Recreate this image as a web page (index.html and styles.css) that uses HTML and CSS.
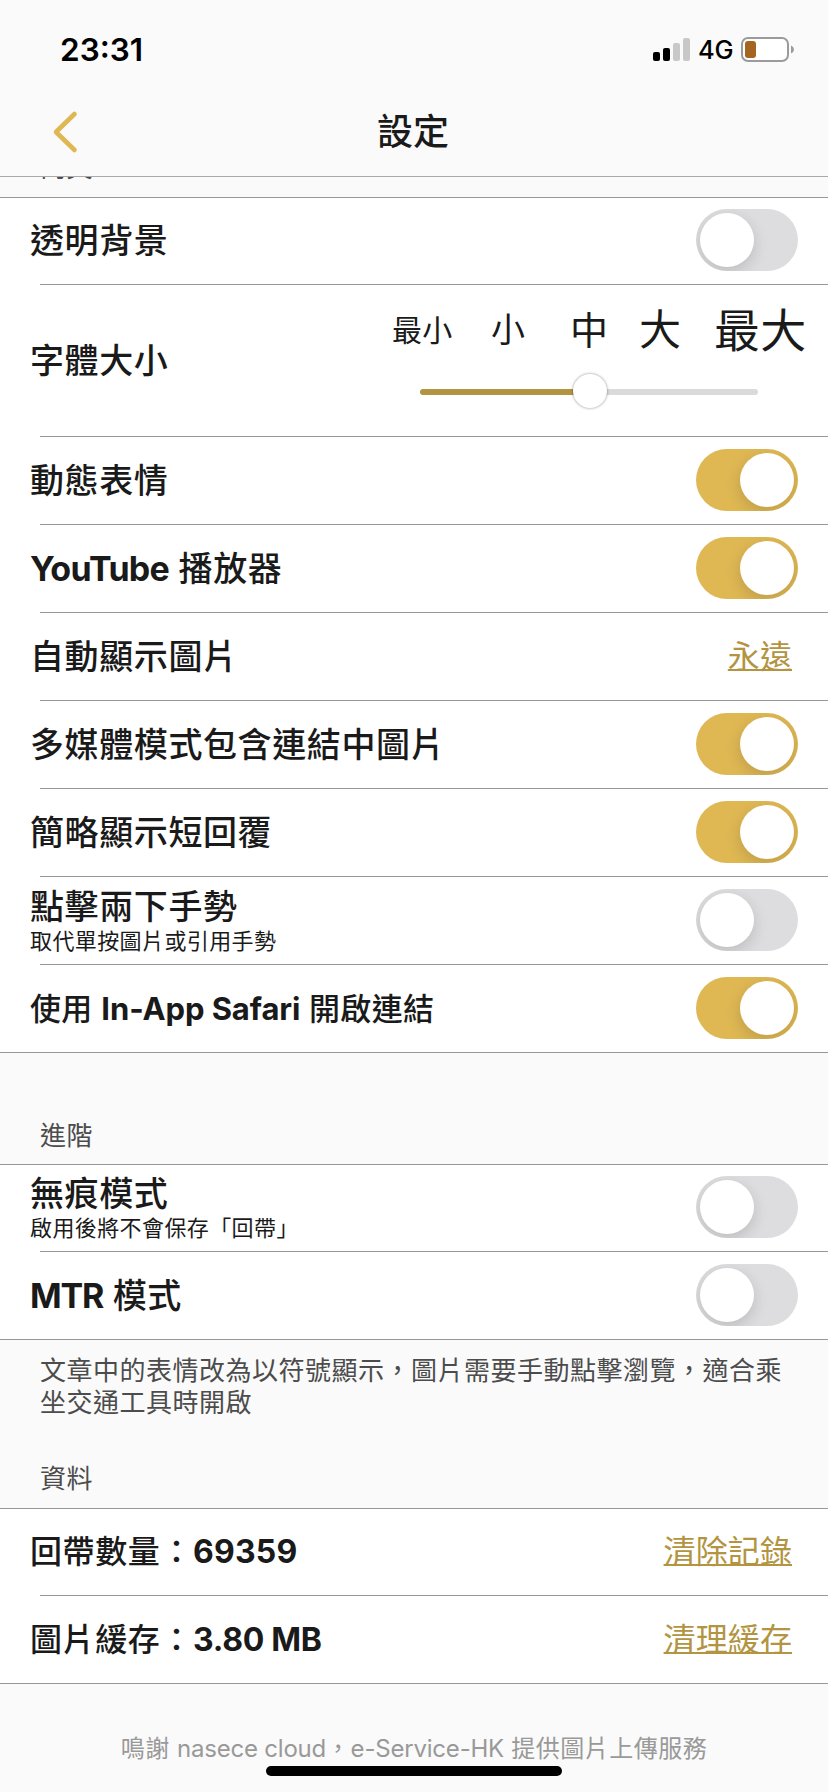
FILE: index.html
```html
<!DOCTYPE html>
<html lang="zh-Hant">
<head>
<meta charset="utf-8">
<title>設定</title>
<link rel="stylesheet" href="styles.css">
</head>
<body>
<div class="screen">
  <header class="top">
    <div class="status">
      <span class="time">23:31</span>
      <div class="indicators">
        <svg class="signal" width="38" height="24" viewBox="0 0 38 24">
          <rect x="0" y="14" width="7" height="9" rx="2" fill="#000"/>
          <rect x="10" y="10" width="7" height="13" rx="2" fill="#000"/>
          <rect x="20" y="5" width="7" height="18" rx="2" fill="#c8c8c8"/>
          <rect x="30" y="0" width="7" height="23" rx="2" fill="#c8c8c8"/>
        </svg>
        <span class="network">4G</span>
        <svg class="battery" width="54" height="26" viewBox="0 0 54 26">
          <rect x="1" y="1" width="46" height="23" rx="6" fill="#fff" stroke="#9b9b9b" stroke-width="2"/>
          <rect x="4" y="4" width="11" height="17" rx="3" fill="#a56420"/>
          <path d="M50 8.500q3 1.500 3 4t-3 4z" fill="#9b9b9b"/>
        </svg>
      </div>
    </div>
    <nav class="nav">
      <svg class="back" width="28" height="46" viewBox="0 0 28 46"><path d="M23.500 5L5 23L23.500 41" fill="none" stroke="#dfb854" stroke-width="4.600" stroke-linecap="round" stroke-linejoin="round"/></svg>
      <h1 class="title">設定</h1>
    </nav>
  </header>
  <main>
    <div class="cut"><span>內文</span></div>
    <section class="group">
      <div class="row first"><span class="label">透明背景</span><span class="toggle"><i></i></span></div>
      <hr>
      <div class="row tall">
        <span class="label">字體大小</span>
        <div class="sizer">
          <div class="sizes"><span class="s1">最小</span><span class="s2">小</span><span class="s3">中</span><span class="s4">大</span><span class="s5">最大</span></div>
          <div class="slider"><div class="fill"></div><div class="knob"></div><div class="rest"></div></div>
        </div>
      </div>
      <hr>
      <div class="row"><span class="label">動態表情</span><span class="toggle on"><i></i></span></div>
      <hr>
      <div class="row"><span class="label"><b class="yt">YouTube</b> 播放器</span><span class="toggle on"><i></i></span></div>
      <hr>
      <div class="row"><span class="label">自動顯示圖片</span><a class="link">永遠</a></div>
      <hr>
      <div class="row"><span class="label">多媒體模式包含連結中圖片</span><span class="toggle on"><i></i></span></div>
      <hr>
      <div class="row"><span class="label">簡略顯示短回覆</span><span class="toggle on"><i></i></span></div>
      <hr>
      <div class="row"><div class="stack"><span class="label">點擊兩下手勢</span><span class="sub">取代單按圖片或引用手勢</span></div><span class="toggle"><i></i></span></div>
      <hr>
      <div class="row"><span class="label narrow">使用 <b class="sf">In-App Safari</b> 開啟連結</span><span class="toggle on"><i></i></span></div>
    </section>
    <h2 class="heading wide">進階</h2>
    <section class="group">
      <div class="row first"><div class="stack"><span class="label">無痕模式</span><span class="sub">啟用後將不會保存「回帶」</span></div><span class="toggle"><i></i></span></div>
      <hr>
      <div class="row"><span class="label"><b class="mtr">MTR</b> 模式</span><span class="toggle"><i></i></span></div>
    </section>
    <p class="note">文章中的表情改為以符號顯示，圖片需要手動點擊瀏覽，適合乘坐交通工具時開啟</p>
    <h2 class="heading">資料</h2>
    <section class="group">
      <div class="row first"><span class="label value"><span class="key">回帶數量：</span><b class="count">69359</b></span><a class="link">清除記錄</a></div>
      <hr>
      <div class="row"><span class="label value"><span class="key">圖片緩存：</span><b class="size">3.80 MB</b></span><a class="link">清理緩存</a></div>
    </section>
    <p class="credit">鳴謝 <span>nasece cloud</span>，<span>e-Service-HK</span> 提供圖片上傳服務</p>
  </main>
  <div class="home"></div>
</div>
</body>
</html>
```
FILE: styles.css
```css
* { box-sizing: border-box; }
body {
  margin: 0;
  background: #fafafa;
  color: #1a1a1a;
  font-family: Inter, "Noto Sans CJK TC", sans-serif;
}
.screen {
  position: relative;
  width: 828px;
  height: 1792px;
  overflow: hidden;
}
.top {
  height: 177px;
  border-bottom: 1px solid #a9a9a9;
}
.status {
  display: flex;
  justify-content: space-between;
  height: 88px;
  padding: 30px 33px 0 60px;
}
.time {
  color: #000;
  font-size: 31.500px;
  font-weight: 600;
  line-height: 40px;
}
.indicators { display: flex; }
.signal { margin: 8px 7px 0 0; }
.network {
  width: 36px;
  margin-right: 7px;
  color: #000;
  font-size: 25.500px;
  font-weight: 500;
  letter-spacing: -.3px;
  line-height: 40px;
  white-space: nowrap;
}
.battery { margin-top: 7px; }
.nav {
  display: grid;
  grid-template-columns: 1fr auto 1fr;
  height: 88px;
}
.back { margin: 21px 0 0 51px; }
.title {
  margin: 0 2px 0 0;
  font-size: 36px;
  font-weight: 500;
  line-height: 88px;
}
.cut {
  height: 20px;
  padding-left: 40px;
  overflow: hidden;
}
.cut span {
  display: block;
  margin-top: -25px;
  color: #4c4c4c;
  font-size: 26px;
  letter-spacing: .45px;
  line-height: 32px;
}
.group {
  background: #fff;
  border-top: 1px solid #979797;
  border-bottom: 1px solid #979797;
}
hr {
  height: 1px;
  margin: 0 0 0 40px;
  border: 0;
  background: #979797;
}
.row {
  display: flex;
  align-items: center;
  justify-content: space-between;
  height: 87px;
  padding: 0 30px 0 30px;
}
.row.first { height: 86px; }
.row.tall { height: 151px; padding-right: 0; }
.label {
  font-size: 34px;
  font-weight: 500;
  letter-spacing: .6px;
  line-height: 40px;
  white-space: nowrap;
}
.label b {
  font-weight: 700;
  letter-spacing: 0;
}
.label .yt { letter-spacing: -.8px; }
.label .mtr { letter-spacing: -1.200px; }
.label .sf { letter-spacing: -.1px; }
.label .count { letter-spacing: .2px; }
.label .size { letter-spacing: -.3px; }
.narrow { font-size: 31px; letter-spacing: .35px; }
.value { font-size: 32px; letter-spacing: 0; }
.key { letter-spacing: .6px; }
.stack {
  display: flex;
  flex-direction: column;
  padding-top: 4px;
}
.stack .label { line-height: 36px; }
.sub {
  font-size: 22px;
  letter-spacing: .4px;
  line-height: 32px;
  white-space: nowrap;
}
.toggle {
  display: flex;
  align-self: flex-end;
  width: 102px;
  height: 62px;
  margin-bottom: 13px;
  padding: 4px;
  overflow: hidden;
  border-radius: 31px;
  background: #dddddf;
}
.toggle i {
  width: 54px;
  height: 54px;
  border-radius: 50%;
  background: #fff;
  box-shadow: 0 5px 15px rgba(0, 0, 0, .15);
}
.toggle.on {
  justify-content: flex-end;
  background: #dfb854;
}
.link {
  margin-right: 6px;
  color: #b29441;
  font-size: 32px;
  letter-spacing: .1px;
  line-height: 40px;
  text-decoration: underline;
  text-decoration-thickness: 2px;
  text-underline-offset: 1px;
  text-decoration-skip-ink: none;
}
.sizer { width: 436px; height: 151px; }
.sizes {
  display: flex;
  height: 86px;
  padding-top: 5px;
  line-height: 80px;
  white-space: nowrap;
}
.s1 { width: 99px; font-size: 30px; letter-spacing: .3px; }
.s2 { width: 79px; font-size: 34px; }
.s3 { width: 69px; font-size: 38px; }
.s4 { width: 75px; font-size: 42px; }
.s5 { font-size: 46px; letter-spacing: .3px; }
.slider {
  display: flex;
  align-items: center;
  width: 338px;
  height: 40px;
  margin: 1px 0 0 28px;
}
.fill, .rest { height: 6px; border-radius: 3px; }
.fill { width: 158px; margin-right: -5px; background: #b29441; }
.rest { flex: 1; margin-left: -5px; background: #dadada; }
.knob {
  z-index: 1;
  width: 34px;
  height: 34px;
  margin-top: -2px;
  border-radius: 50%;
  background: #fff;
  box-shadow: 0 0 3px rgba(0, 0, 0, .45);
}
.heading {
  height: 85px;
  margin: 0;
  padding-left: 40px;
  color: #4c4c4c;
  font-size: 26px;
  font-weight: 400;
  letter-spacing: .45px;
  line-height: 32px;
  padding-top: 40px;
}
.heading.wide { height: 111px; padding-top: 67px; }
.note {
  height: 83px;
  margin: 0;
  padding: 15px 40px 0;
  color: #4c4c4c;
  font-size: 26px;
  letter-spacing: .5px;
  line-height: 32px;
}
.credit {
  margin: 49px 0 0;
  color: #999;
  font-size: 24px;
  letter-spacing: .5px;
  line-height: 32px;
  text-align: center;
  white-space: nowrap;
}
.credit span { letter-spacing: -.2px; }
.home {
  position: absolute;
  left: 266px;
  bottom: 16px;
  width: 296px;
  height: 10px;
  border-radius: 5px;
  background: #000;
}
```
